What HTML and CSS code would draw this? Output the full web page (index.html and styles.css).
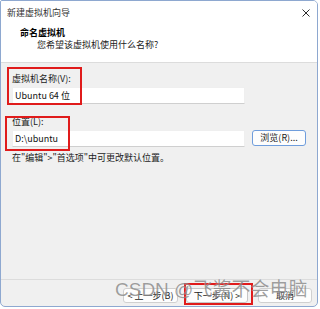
FILE: index.html
```html
<!DOCTYPE html>
<html lang="zh-CN">
<head>
  <meta charset="UTF-8">
  <title>新建虚拟机向导</title>
  <link rel="stylesheet" href="styles.css">
</head>
<body>
  <div class="window">
    <div class="top">
      <div class="titlebar">
        <span class="title">新建虚拟机向导</span>
        <svg class="close" width="8" height="8" viewBox="0 0 8 8">
          <path d="M0.5 0.5 L7.5 7.5 M7.5 0.5 L0.5 7.5" stroke="#2b2b2b" stroke-width="1" fill="none"/>
        </svg>
      </div>
      <div class="heading">命名虚拟机</div>
      <div class="sub">您希望该虚拟机使用什么名称?</div>
    </div>

    <div class="body">
      <div class="label">虚拟机名称(V):</div>
      <div class="field name-field">Ubuntu 64 位</div>

      <div class="label second">位置(L):</div>
      <div class="row">
        <div class="field path-field">D:\ubuntu</div>
        <div class="btn browse">浏览(R)...</div>
      </div>
      <div class="hint">在"编辑"&gt;"首选项"中可更改默认位置。</div>
    </div>

    <div class="footer">
      <div class="btn back">&lt; 上一步(B)</div>
      <div class="btn next">下一步(N) &gt;</div>
      <div class="btn cancel">取消</div>
    </div>

    <!-- annotations -->
    <div class="mark mark-name"></div>
    <div class="mark mark-path"></div>
    <div class="mark mark-next"></div>
    <div class="watermark">CSDN @飞酱不会电脑</div>
  </div>
</body>
</html>
```

FILE: styles.css
```css
body {
  margin: 0;
  background: #fff;
  font-family: "Noto Sans CJK SC", "Noto Sans", sans-serif;
  font-size: 9px;
  color: #1b1b1b;
}

.window {
  position: relative;
  width: 318px;
  height: 307px;
  box-sizing: border-box;
  border: 1px solid #8ea8d0;
  border-radius: 2px 5px 5px 5px;
  background: #f0f0f0;
  display: flex;
  flex-direction: column;
  overflow: hidden;
}

.top {
  background: #fff;
  height: 61px;
  border-bottom: 1px solid #dcdcdc;
}

.titlebar {
  height: 23px;
  display: flex;
  align-items: center;
  justify-content: space-between;
  padding: 0 7px 0 6px;
}

.title {
  color: #333;
  line-height: 12px;
}

.heading {
  margin-top: 3px;
  padding-left: 19px;
  font-weight: bold;
  color: #000;
  line-height: 12px;
}

.sub {
  padding-left: 36px;
  line-height: 12px;
}

.body {
  flex: 1;
  padding: 10px 11px 0 11px;
}

.label {
  line-height: 12px;
  margin-bottom: 2px;
}

.label.second {
  margin-top: 12px;
}

.field {
  box-sizing: border-box;
  height: 17px;
  width: 233px;
  background: #fff;
  border: 1px solid #efefef;
  border-bottom-color: #cfcfcf;
  padding-left: 2px;
  line-height: 15px;
  color: #111;
}

.row {
  display: flex;
  gap: 7px;
}

.btn {
  box-sizing: border-box;
  height: 15px;
  background: #fdfdfd;
  border: 1px solid #d0d0d0;
  border-radius: 3px;
  text-align: center;
  line-height: 13px;
  color: #1b1b1b;
}

.browse {
  width: 54px;
  height: 16px;
  line-height: 14px;
  border-color: #6f9ddc;
}

.hint {
  margin-top: 5px;
  line-height: 12px;
}

.footer {
  height: 27px;
  border-top: 1px solid #dcdcdc;
  display: flex;
  justify-content: flex-end;
  align-items: flex-start;
  padding: 8px 5px 0 0;
  box-sizing: border-box;
}

.back {
  width: 55px;
  margin-right: 8px;
}

.next {
  width: 62px;
  margin-right: 10px;
  border-color: #c6c6c6;
}

.cancel {
  width: 54px;
}

.mark {
  position: absolute;
  box-sizing: border-box;
  border: 2px solid #e01b1b;
}

.mark-name {
  left: 6px;
  top: 66px;
  width: 75px;
  height: 38px;
}

.mark-path {
  left: 4px;
  top: 115px;
  width: 65px;
  height: 35px;
}

.mark-next {
  left: 183px;
  top: 282px;
  width: 69px;
  height: 22px;
}

.watermark {
  position: absolute;
  left: 114px;
  top: 279px;
  font-family: "Liberation Sans", "Noto Sans CJK SC", sans-serif;
  font-size: 19px;
  line-height: 20px;
  color: rgba(95, 95, 95, 0.6);
  white-space: nowrap;
  text-shadow: 0 0 1px rgba(255, 255, 255, 0.6);
}
```
